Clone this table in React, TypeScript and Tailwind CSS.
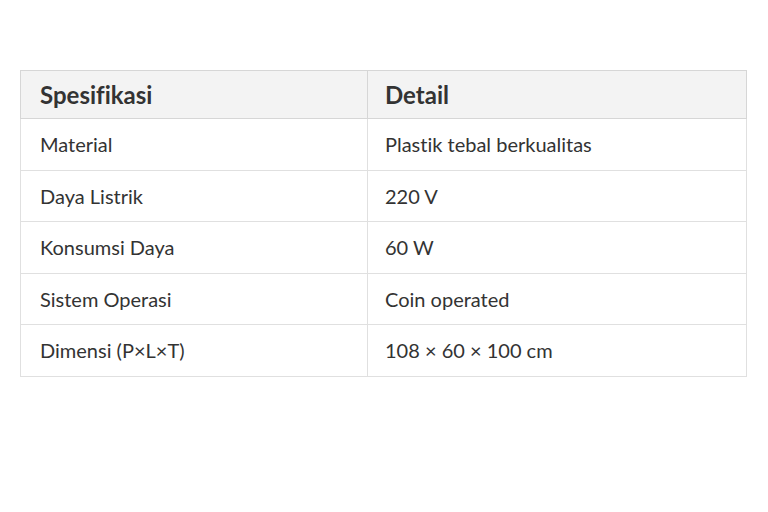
export default function App() {
  const rows: [string, string][] = [
    ["Material", "Plastik tebal berkualitas"],
    ["Daya Listrik", "220 V"],
    ["Konsumsi Daya", "60 W"],
    ["Sistem Operasi", "Coin operated"],
    ["Dimensi (P×L×T)", "108 × 60 × 100 cm"],
  ];
  return (
    <div className="w-[768px] h-[512px] bg-white pt-[70px] pl-[20px] [font-variant-ligatures:none]" style={{ fontFamily: "Lato, 'Noto Sans', sans-serif" }}>
      <table className="w-[727px] border-collapse border border-[#d6d6d6] text-[#333333]">
        <thead>
          <tr className="h-[48px] bg-[#f3f3f3]">
            <th className="w-[347px] border border-[#d6d6d6] px-[19px] text-left text-[24px] font-bold">Spesifikasi</th>
            <th className="border border-[#d6d6d6] px-[17px] text-left text-[24px] font-bold">Detail</th>
          </tr>
        </thead>
        <tbody>
          {rows.map(([a, b], i) => (
            <tr key={i} className="h-[51.5px]">
              <td className="border border-[#e0e0e0] px-[19px] text-[20px]">{a}</td>
              <td className="border border-[#e0e0e0] px-[17px] text-[20px]">{b}</td>
            </tr>
          ))}
        </tbody>
      </table>
    </div>
  );
}
